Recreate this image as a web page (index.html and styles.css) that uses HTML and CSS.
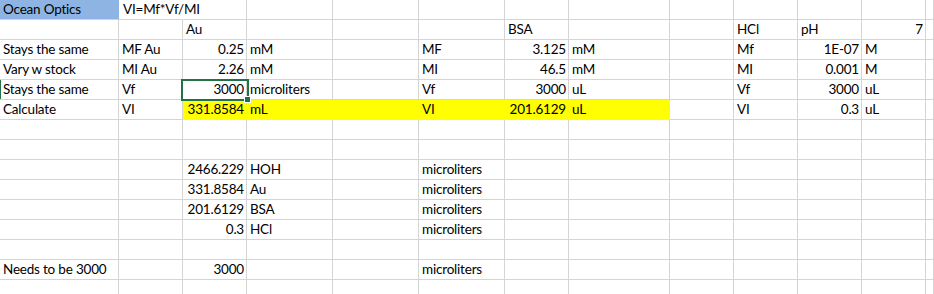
FILE: index.html
```html
<!DOCTYPE html>
<html>
<head>
<meta charset="utf-8">
<link rel="stylesheet" href="styles.css">
</head>
<body>
<div class="sheet">
  <div class="row">
    <div class="c blue">Ocean Optics</div><div class="c over">VI=Mf*Vf/MI</div><div class="c"></div><div class="c"></div><div class="c"></div><div class="c"></div><div class="c"></div><div class="c"></div><div class="c"></div><div class="c"></div><div class="c"></div><div class="c"></div><div class="c"></div>
  </div>
  <div class="row">
    <div class="c"></div><div class="c"></div><div class="c">Au</div><div class="c"></div><div class="c"></div><div class="c"></div><div class="c">BSA</div><div class="c"></div><div class="c"></div><div class="c">HCl</div><div class="c">pH</div><div class="c r">7</div><div class="c"></div>
  </div>
  <div class="row">
    <div class="c">Stays the same</div><div class="c">MF Au</div><div class="c r">0.25</div><div class="c">mM</div><div class="c"></div><div class="c">MF</div><div class="c r">3.125</div><div class="c">mM</div><div class="c"></div><div class="c">Mf</div><div class="c r">1E-07</div><div class="c">M</div><div class="c"></div>
  </div>
  <div class="row">
    <div class="c">Vary w stock</div><div class="c">MI Au</div><div class="c r">2.26</div><div class="c">mM</div><div class="c"></div><div class="c">MI</div><div class="c r">46.5</div><div class="c">mM</div><div class="c"></div><div class="c">MI</div><div class="c r">0.001</div><div class="c">M</div><div class="c"></div>
  </div>
  <div class="row">
    <div class="c rowmark">Stays the same</div><div class="c">Vf</div><div class="c r sel">3000</div><div class="c">microliters</div><div class="c"></div><div class="c">Vf</div><div class="c r">3000</div><div class="c">uL</div><div class="c"></div><div class="c">Vf</div><div class="c r">3000</div><div class="c">uL</div><div class="c"></div>
  </div>
  <div class="row">
    <div class="c">Calculate</div><div class="c">VI</div><div class="c r yel">331.8584</div><div class="c yel">mL</div><div class="c yel"></div><div class="c yel">VI</div><div class="c r yel">201.6129</div><div class="c yel">uL</div><div class="c"></div><div class="c">VI</div><div class="c r">0.3</div><div class="c">uL</div><div class="c"></div>
  </div>
  <div class="row">
    <div class="c"></div><div class="c"></div><div class="c"></div><div class="c"></div><div class="c"></div><div class="c"></div><div class="c"></div><div class="c"></div><div class="c"></div><div class="c"></div><div class="c"></div><div class="c"></div><div class="c"></div>
  </div>
  <div class="row">
    <div class="c"></div><div class="c"></div><div class="c"></div><div class="c"></div><div class="c"></div><div class="c"></div><div class="c"></div><div class="c"></div><div class="c"></div><div class="c"></div><div class="c"></div><div class="c"></div><div class="c"></div>
  </div>
  <div class="row">
    <div class="c"></div><div class="c"></div><div class="c r">2466.229</div><div class="c">HOH</div><div class="c"></div><div class="c">microliters</div><div class="c"></div><div class="c"></div><div class="c"></div><div class="c"></div><div class="c"></div><div class="c"></div><div class="c"></div>
  </div>
  <div class="row">
    <div class="c"></div><div class="c"></div><div class="c r">331.8584</div><div class="c">Au</div><div class="c"></div><div class="c">microliters</div><div class="c"></div><div class="c"></div><div class="c"></div><div class="c"></div><div class="c"></div><div class="c"></div><div class="c"></div>
  </div>
  <div class="row">
    <div class="c"></div><div class="c"></div><div class="c r">201.6129</div><div class="c">BSA</div><div class="c"></div><div class="c">microliters</div><div class="c"></div><div class="c"></div><div class="c"></div><div class="c"></div><div class="c"></div><div class="c"></div><div class="c"></div>
  </div>
  <div class="row">
    <div class="c"></div><div class="c"></div><div class="c r">0.3</div><div class="c">HCl</div><div class="c"></div><div class="c">microliters</div><div class="c"></div><div class="c"></div><div class="c"></div><div class="c"></div><div class="c"></div><div class="c"></div><div class="c"></div>
  </div>
  <div class="row">
    <div class="c"></div><div class="c"></div><div class="c"></div><div class="c"></div><div class="c"></div><div class="c"></div><div class="c"></div><div class="c"></div><div class="c"></div><div class="c"></div><div class="c"></div><div class="c"></div><div class="c"></div>
  </div>
  <div class="row">
    <div class="c">Needs to be 3000</div><div class="c"></div><div class="c r">3000</div><div class="c"></div><div class="c"></div><div class="c">microliters</div><div class="c"></div><div class="c"></div><div class="c"></div><div class="c"></div><div class="c"></div><div class="c"></div><div class="c"></div>
  </div>
  <div class="row">
    <div class="c"></div><div class="c"></div><div class="c"></div><div class="c"></div><div class="c"></div><div class="c"></div><div class="c"></div><div class="c"></div><div class="c"></div><div class="c"></div><div class="c"></div><div class="c"></div><div class="c"></div>
  </div>
</div>
</body>
</html>
```
FILE: styles.css
```css
html, body {
  margin: 0;
  padding: 0;
  background: #ffffff;
}
body {
  width: 934px;
  height: 294px;
  overflow: hidden;
  font-family: Lato, "Liberation Sans", sans-serif;
  font-size: 13.5px;
  letter-spacing: -0.2px;
  color: #000000;
}
.sheet {
  display: flex;
  flex-direction: column;
}
.row {
  display: grid;
  grid-template-columns: 119px 64px 64px 86px 86px 86px 64px 101px 64px 64px 64px 64px 1fr;
  height: 20px;
}
.c {
  box-sizing: border-box;
  height: 20px;
  border-right: 1px solid #d4d4d4;
  border-bottom: 1px solid #d4d4d4;
  padding: 0 2px 0 3px;
  line-height: 19px;
  white-space: nowrap;
  overflow: hidden;
}
.r {
  text-align: right;
}
.over {
  overflow: visible;
  border-right-color: transparent;
  padding-left: 4px;
}
.blue {
  background: #8db4e2;
  border-right-color: #8db4e2;
}
.yel {
  background: #ffff00;
  border-right-color: #ffff00;
  border-bottom-color: #ffff00;
}
.rowmark {
  box-shadow: inset 1px 0 0 #217346;
}
.sel {
  position: relative;
  overflow: visible;
}
.sel::before {
  content: "";
  position: absolute;
  left: -2px;
  top: -1px;
  width: 68px;
  height: 22px;
  box-sizing: border-box;
  border: 2px solid #217346;
}
.sel::after {
  content: "";
  position: absolute;
  left: 62px;
  top: 17px;
  width: 5px;
  height: 5px;
  background: #217346;
  box-shadow: 0 0 0 1px #ffffff;
}
```
